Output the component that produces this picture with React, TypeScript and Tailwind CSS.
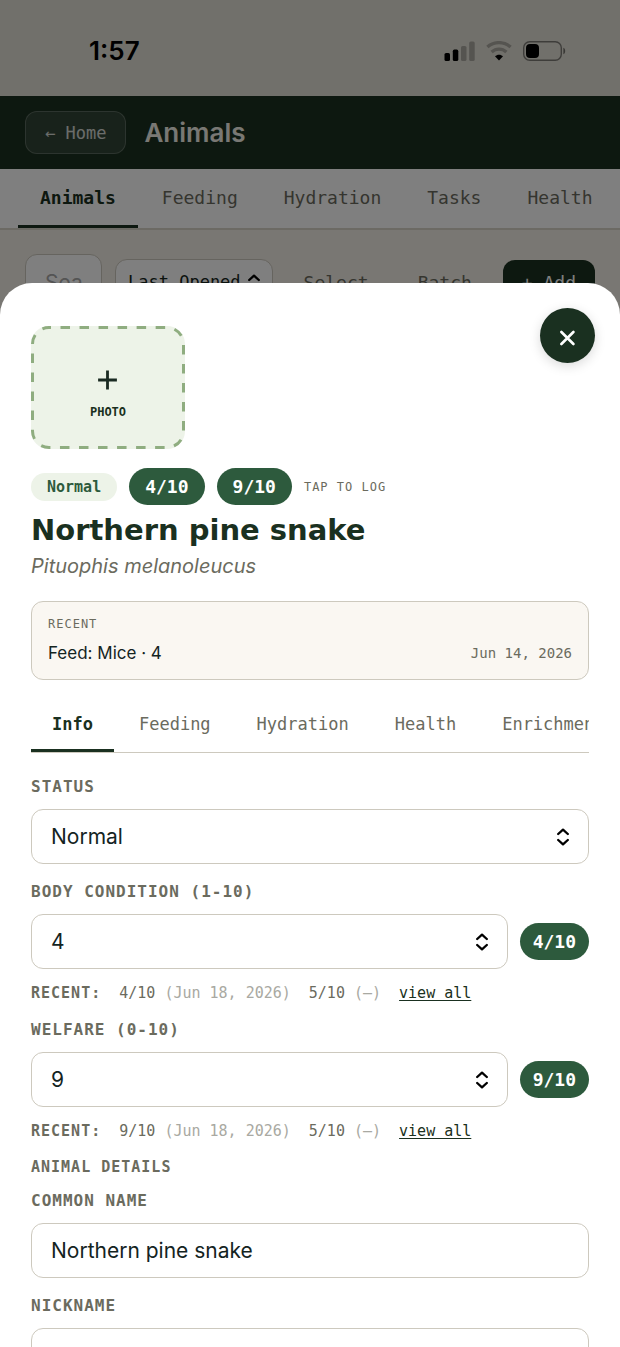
import React, { useState } from "react";

const MONO = "font-['DejaVu_Sans_Mono','Liberation_Mono',monospace]";

function StatusBar() {
  return (
    <div className="flex h-24 items-center justify-between bg-[#e3e0d6] pt-[5px] pr-[54px] pl-[89px] text-black">
      <span className="text-[26px] leading-8 font-semibold">1:57</span>
      <div className="flex items-center gap-[11px]">
        <svg width="31" height="20" viewBox="0 0 31 20" aria-hidden="true">
          <rect x="0.5" y="12" width="5.5" height="8" rx="1.6" />
          <rect x="8.8" y="8.6" width="5.5" height="11.4" rx="1.6" />
          <rect x="17" y="5" width="5.5" height="15" rx="1.6" opacity="0.25" />
          <rect x="25.2" y="0.5" width="5.5" height="19.5" rx="1.6" opacity="0.25" />
        </svg>
        <svg width="26" height="20" viewBox="0 0 26 20" fill="none" aria-hidden="true">
          <path d="M1.4 6C8 .2 18 .2 24.6 6" stroke="#000" strokeWidth="3.4" opacity="0.25" />
          <path d="M5.6 11C10 7.1 16 7.1 20.4 11" stroke="#000" strokeWidth="3.4" opacity="0.25" />
          <path d="M13 19.4 9 15.3C11.2 13.2 14.8 13.2 17 15.3Z" fill="#000" />
        </svg>
        <svg width="43" height="20" viewBox="0 0 43 20" fill="none" aria-hidden="true">
          <rect x="0.7" y="0.7" width="37.6" height="18.6" rx="6" stroke="#000" strokeOpacity="0.45" strokeWidth="1.4" />
          <rect x="3" y="3" width="13" height="14" rx="4" fill="#000" />
          <path d="M40.4 6.8c2.4.8 2.4 5.6 0 6.4Z" fill="#000" fillOpacity="0.5" />
        </svg>
      </div>
    </div>
  );
}

function Background() {
  const tabs = ["Animals", "Feeding", "Hydration", "Tasks", "Health"];
  return (
    <div className="min-h-screen overflow-hidden bg-[#f2eee6]">
      <StatusBar />
      <header className="flex items-center gap-[18px] bg-[#1a3020] px-[25px] py-[15px]">
        <a
          href="#home"
          className={`${MONO} flex h-[43px] items-center rounded-xl border border-white/20 bg-white/10 px-[19px] pt-[2px] text-[17px] text-white/80`}
        >
          ← Home
        </a>
        <h1 className="text-[26px] leading-8 font-semibold text-[#f3f0e8]">Animals</h1>
      </header>
      <nav className="flex gap-[2px] overflow-hidden border-b-2 border-[#d8d4c9] bg-white px-[18px]">
        {tabs.map((t, i) => (
          <a
            key={t}
            href={"#" + t.toLowerCase()}
            className={`${MONO} flex h-[59px] shrink-0 items-center border-b-3 px-[22px] text-[18px] ${
              i === 0 ? "border-[#1a3020] font-bold text-[#1a3020]" : "border-transparent text-[#6b6b5e]"
            }`}
          >
            {t}
          </a>
        ))}
      </nav>
      <div className="flex items-center gap-[13px] px-[25px] pt-6">
        <input
          aria-label="Search"
          placeholder="Sea"
          className="h-14 w-0 min-w-0 flex-1 rounded-xl border border-[#cdc9be] bg-white pl-[19px] text-[21px] placeholder:text-[#a8a8a8]"
        />
        <button
          type="button"
          className={`${MONO} flex h-[46px] items-center gap-[7px] rounded-xl border border-[#cdc9be] bg-white px-3 pt-[2px] text-[17px] whitespace-nowrap text-[#14241a]`}
        >
          Last Opened
          <SortArrows />
        </button>
        <button type="button" className={`${MONO} h-11 px-[18px] text-[18px] text-[#6b6b5e]`}>
          Select
        </button>
        <button type="button" className={`${MONO} h-11 px-[18px] text-[18px] text-[#6b6b5e]`}>
          Batch
        </button>
        <button
          type="button"
          className={`${MONO} h-11 rounded-xl bg-[#1a3020] px-[19px] text-[18px] whitespace-nowrap text-white`}
        >
          + Add
        </button>
      </div>
    </div>
  );
}

function SortArrows() {
  return (
    <svg width="12" height="18" viewBox="0 0 12 18" fill="none" stroke="#000" strokeWidth="2.3" strokeLinecap="round" strokeLinejoin="round" aria-hidden="true">
      <path d="M1.2 6 6 1.6 10.8 6M1.2 12 6 16.4 10.8 12" />
    </svg>
  );
}

function Label({ htmlFor, children }: { htmlFor: string; children: React.ReactNode }) {
  return (
    <label htmlFor={htmlFor} className={`${MONO} block text-[16px] leading-6 font-bold tracking-[1px] text-[#6b6b5e]`}>
      {children}
    </label>
  );
}

const FIELD =
  "block h-[55px] w-full appearance-none rounded-xl border border-[#cdc9be] bg-white px-[19px] text-[21px] text-[#14241f] outline-none";

function SelectBox({ id, value, options }: { id: string; value: string; options: string[] }) {
  const [v, setV] = useState(value);
  return (
    <div className="relative min-w-0 flex-1">
      <select id={id} value={v} onChange={(e) => setV(e.target.value)} className={FIELD}>
        {options.map((o) => (
          <option key={o}>{o}</option>
        ))}
      </select>
      <span className="pointer-events-none absolute inset-y-0 right-5 flex items-center">
        <SortArrows />
      </span>
    </div>
  );
}

const SCORES = ["1", "2", "3", "4", "5", "6", "7", "8", "9", "10"];

function ScoreField({ id, label, value }: { id: string; label: string; value: string }) {
  return (
    <div>
      <Label htmlFor={id}>{label}</Label>
      <div className="mt-[10px] flex items-center gap-3">
        <SelectBox id={id} value={value} options={SCORES} />
        <span className={`${MONO} flex h-[37px] items-center rounded-full bg-[#2d5a3d] px-[13px] text-[18px] font-bold text-white`}>
          {value}/10
        </span>
      </div>
      <div className={`${MONO} mt-3 flex gap-[18px] text-[15px] leading-6 whitespace-nowrap text-[#6b6b5e]`}>
        <span className="font-bold tracking-[1px]">RECENT:</span>
        <span>
          {value}/10 <span className="text-[#a9a9a2]">(Jun 18, 2026)</span>
        </span>
        <span>
          5/10 <span className="text-[#a9a9a2]">(—)</span>
        </span>
        <a href={"#" + id + "-history"} className="text-[#1a3020] underline underline-offset-2">
          view all
        </a>
      </div>
    </div>
  );
}

function Sheet() {
  const tabs = ["Info", "Feeding", "Hydration", "Health", "Enrichment"];
  return (
    <section
      role="dialog"
      aria-label="Northern pine snake"
      className="relative min-h-0 flex-1 overflow-x-hidden overflow-y-auto rounded-t-[32px] bg-white px-[31px] pt-[43px] [scrollbar-width:none]"
    >
      <button
        type="button"
        aria-label="Close"
        className="absolute top-[25px] right-[25px] flex size-[55px] items-center justify-center rounded-full bg-[#1a3020] pt-[5px] shadow-[0_3px_12px_rgba(0,0,0,0.15)]"
      >
        <svg width="16" height="16" viewBox="0 0 16 16" stroke="#fff" strokeWidth="2.6" strokeLinecap="round" aria-hidden="true">
          <path d="M1.4 2 13.4 14M13.4 2 1.4 14" />
        </svg>
      </button>

      <button
        type="button"
        className="relative flex h-[123px] w-[154px] flex-col items-center justify-center gap-[14px] rounded-[18px] bg-[#edf3e8] pt-[15px]"
      >
        <svg className="absolute inset-0" width="154" height="123" viewBox="0 0 154 123" fill="none" aria-hidden="true">
          <rect x="1.5" y="1.5" width="151" height="120" rx="16.5" stroke="#8fad80" strokeWidth="3" strokeDasharray="9.5 9.53" strokeDashoffset="-11.5" />
        </svg>
        <svg width="20" height="20" viewBox="0 0 20 20" stroke="#1a2a22" strokeWidth="2.8" aria-hidden="true">
          <path d="M9.5 .6V19.4M.1 10H18.9" />
        </svg>
        <span className={`${MONO} text-[12px] leading-4 font-bold text-[#1a3020]`}>PHOTO</span>
      </button>

      <div className="mt-[19px] flex items-center gap-3">
        <span className={`${MONO} flex h-7 items-center rounded-full bg-[#edf3e8] px-4 pt-[2px] text-[15px] font-bold text-[#2d5a3d]`}>
          Normal
        </span>
        <button type="button" className={`${MONO} h-[37px] rounded-full bg-[#2d5a3d] px-4 text-[18px] font-bold text-white`}>
          4/10
        </button>
        <button type="button" className={`${MONO} h-[37px] rounded-full bg-[#2d5a3d] px-4 text-[18px] font-bold text-white`}>
          9/10
        </button>
        <span className={`${MONO} text-[12px] tracking-[1px] text-[#6b6b5e]`}>TAP TO LOG</span>
      </div>

      <h2 className="mt-[3px] font-['DejaVu_Sans',sans-serif] text-[29px] leading-[44px] font-bold whitespace-nowrap text-[#1a3020]">
        Northern pine snake
      </h2>
      <p className="text-[20px] leading-7 text-[#6b6b5e] italic">Pituophis melanoleucus</p>

      <div className="mt-[21px] rounded-xl border border-[#cdc9be] bg-[#faf7f2] px-4 py-3">
        <div className={`${MONO} text-[12px] leading-5 tracking-[1px] text-[#6b6b5e]`}>RECENT</div>
        <div className="mt-[5px] flex items-center justify-between leading-7">
          <span className="text-[17px] text-[#14241f]">Feed: Mice · 4</span>
          <span className={`${MONO} text-[14px] text-[#6b6b5e]`}>Jun 14, 2026</span>
        </div>
      </div>

      <div role="tablist" className="mt-[18px] flex gap-1 overflow-hidden border-b border-[#cdc9be]">
        {tabs.map((t, i) => (
          <button
            key={t}
            type="button"
            role="tab"
            aria-selected={i === 0}
            className={`${MONO} h-[54px] shrink-0 border-b-3 px-[21px] pt-[2px] text-[17px] ${
              i === 0 ? "border-[#1a3020] font-bold text-[#1a3020]" : "border-transparent text-[#6b6b5e]"
            }`}
          >
            {t}
          </button>
        ))}
      </div>

      <form className="mt-[22px]">
        <Label htmlFor="status">STATUS</Label>
        <div className="mt-[10px] mb-4 flex">
          <SelectBox id="status" value="Normal" options={["Normal", "Watch", "Critical"]} />
        </div>
        <div className="flex flex-col gap-[13px]">
          <ScoreField id="body" label="BODY CONDITION (1-10)" value="4" />
          <ScoreField id="welfare" label="WELFARE (0-10)" value="9" />
        </div>
        <h3 className={`${MONO} mt-3 mb-[10px] text-[15px] leading-6 font-bold tracking-[1px] text-[#6b6b5e]`}>ANIMAL DETAILS</h3>
        <Label htmlFor="common">COMMON NAME</Label>
        <input id="common" defaultValue="Northern pine snake" className={`${FIELD} mt-[10px] mb-4`} />
        <Label htmlFor="nickname">NICKNAME</Label>
        <input id="nickname" className={`${FIELD} mt-[10px]`} />
      </form>
    </section>
  );
}

export default function App() {
  return (
    <main className="font-['Inter','Liberation_Sans',sans-serif]">
      <Background />
      <div className="fixed inset-0 flex flex-col bg-black/50 pt-[283px]">
        <Sheet />
      </div>
    </main>
  );
}
